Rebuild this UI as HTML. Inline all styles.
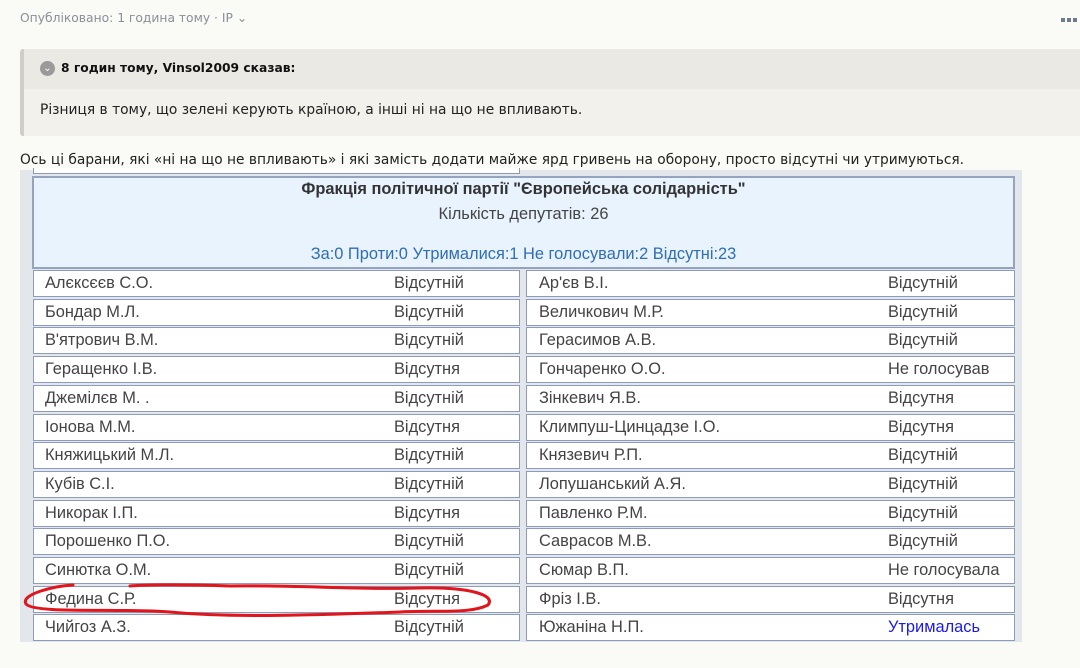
<!DOCTYPE html>
<html><head><meta charset="utf-8"><style>
body{margin:0;width:1080px;height:668px;background:#fafaf6;font-family:"Liberation Sans",Verdana,sans-serif;position:relative;overflow:hidden}
.a{position:absolute}
.meta{left:20px;top:11px;font-size:13.4px;color:#8a8f98;font-family:Verdana,'DejaVu Sans',sans-serif;font-size:12.3px}
.quote{left:20px;top:49px;width:1060px;height:87px;background:#f3f1ec;border-left:4px solid #d0cec8;box-sizing:border-box;border-radius:3px 0 0 3px}
.qh{left:0;top:0;right:0;height:40px;background:#ebe9e3}
.img{left:20px;top:170px;width:1002px;height:472px;background:#e3e6eb}
.cell{position:absolute;background:#fff;border:1px solid #8c9cbc;box-sizing:border-box;height:27px;font-size:16.4px;color:#444;line-height:25px;font-family:"Liberation Sans",Arial,sans-serif}
.cell span{position:absolute;top:0}
</style></head><body>
<div class="a meta">Опубліковано: 1 година тому · IP ⌄</div>
<div class="a" style="left:1061px;top:18px;width:16px;height:4px;background:repeating-linear-gradient(90deg,#6f7a8a 0 4px,transparent 4px 6px)"></div>
<div class="a quote"><div class="a qh"></div>
<div class="a" style="left:16px;top:12px;width:15px;height:15px;border-radius:50%;background:#9a9a9a;color:#fff;font-size:10px;line-height:15px;text-align:center">⌄</div>
<div class="a" style="left:37px;top:12px;font-size:12.3px;font-weight:bold;color:#111;font-family:Verdana,'DejaVu Sans',sans-serif">8 годин тому, Vinsol2009 сказав:</div>
<div class="a" style="left:16px;top:53px;font-size:13.8px;color:#222;font-family:Verdana,'DejaVu Sans',sans-serif">Різниця в тому, що зелені керують країною, а інші ні на що не впливають.</div>
</div>
<div class="a" style="left:20px;top:152px;font-size:13.75px;color:#222;font-family:Verdana,'DejaVu Sans',sans-serif">Ось ці барани, які «ні на що не впливають» і які замість додати майже ярд гривень на оборону, просто відсутні чи утримуються.</div>
<div class="a img"></div>
<div class="a" style="left:33px;top:168px;width:487px;height:6px;background:#fff;border:1px solid #8c9cbc;border-top:none;box-sizing:border-box"></div>
<div class="a" style="left:32px;top:176px;width:983px;height:93px;background:#e8f3fd;border:2px solid #94a3c0;box-sizing:border-box;font-family:'Liberation Sans',Arial,sans-serif">
<div class="a" style="left:0;right:0;text-align:center;top:2px;font-size:16.4px;font-weight:bold;color:#333">Фракція політичної партії "Європейська солідарність"</div>
<div class="a" style="left:0;right:0;text-align:center;top:27px;font-size:16.4px;color:#444">Кількість депутатів: 26</div>
<div class="a" style="left:0;right:0;text-align:center;top:67px;font-size:16.4px;color:#2f6db5">За:0 Проти:0 Утрималися:1 Не голосували:2 Відсутні:23</div>
</div>
<div id="rows"></div>
<svg class="a" style="left:0;top:0" width="1080" height="668"><path d="M73 585 C55 586 20 594 26 604 C34 614 120 608 170 612 C230 618 320 615 400 612 C440 610 470 614 488 605 C496 595 470 587 420 588 C360 590 300 585 230 586 C180 584 140 585 130 586" fill="none" stroke="#e0161c" stroke-width="3" stroke-linecap="round"/></svg>
<script>
var L=[["Алєксєєв С.О.","Відсутній"],["Бондар М.Л.","Відсутній"],["В'ятрович В.М.","Відсутній"],["Геращенко І.В.","Відсутня"],["Джемілєв М. .","Відсутній"],["Іонова М.М.","Відсутня"],["Княжицький М.Л.","Відсутній"],["Кубів С.І.","Відсутній"],["Никорак І.П.","Відсутня"],["Порошенко П.О.","Відсутній"],["Синютка О.М.","Відсутній"],["Федина С.Р.","Відсутня"],["Чийгоз А.З.","Відсутній"]];
var R=[["Ар'єв В.І.","Відсутній"],["Величкович М.Р.","Відсутній"],["Герасимов А.В.","Відсутній"],["Гончаренко О.О.","Не голосував"],["Зінкевич Я.В.","Відсутня"],["Климпуш-Цинцадзе І.О.","Відсутня"],["Князевич Р.П.","Відсутній"],["Лопушанський А.Я.","Відсутній"],["Павленко Р.М.","Відсутній"],["Саврасов М.В.","Відсутній"],["Сюмар В.П.","Не голосувала"],["Фріз І.В.","Відсутня"],["Южаніна Н.П.","Утрималась"]];
var h="";for(var i=0;i<13;i++){var y=Math.round(270+i*28.7);
h+='<div class="cell" style="left:33px;top:'+y+'px;width:487px"><span style="left:11px">'+L[i][0]+'</span><span style="left:360px">'+L[i][1]+'</span></div>';
h+='<div class="cell" style="left:526px;top:'+y+'px;width:489px"><span style="left:12px">'+R[i][0]+'</span><span style="left:361px'+(i==12?';color:#1a1aee':'')+'">'+R[i][1]+'</span></div>';}
document.getElementById("rows").innerHTML=h;
</script>
</body></html>
